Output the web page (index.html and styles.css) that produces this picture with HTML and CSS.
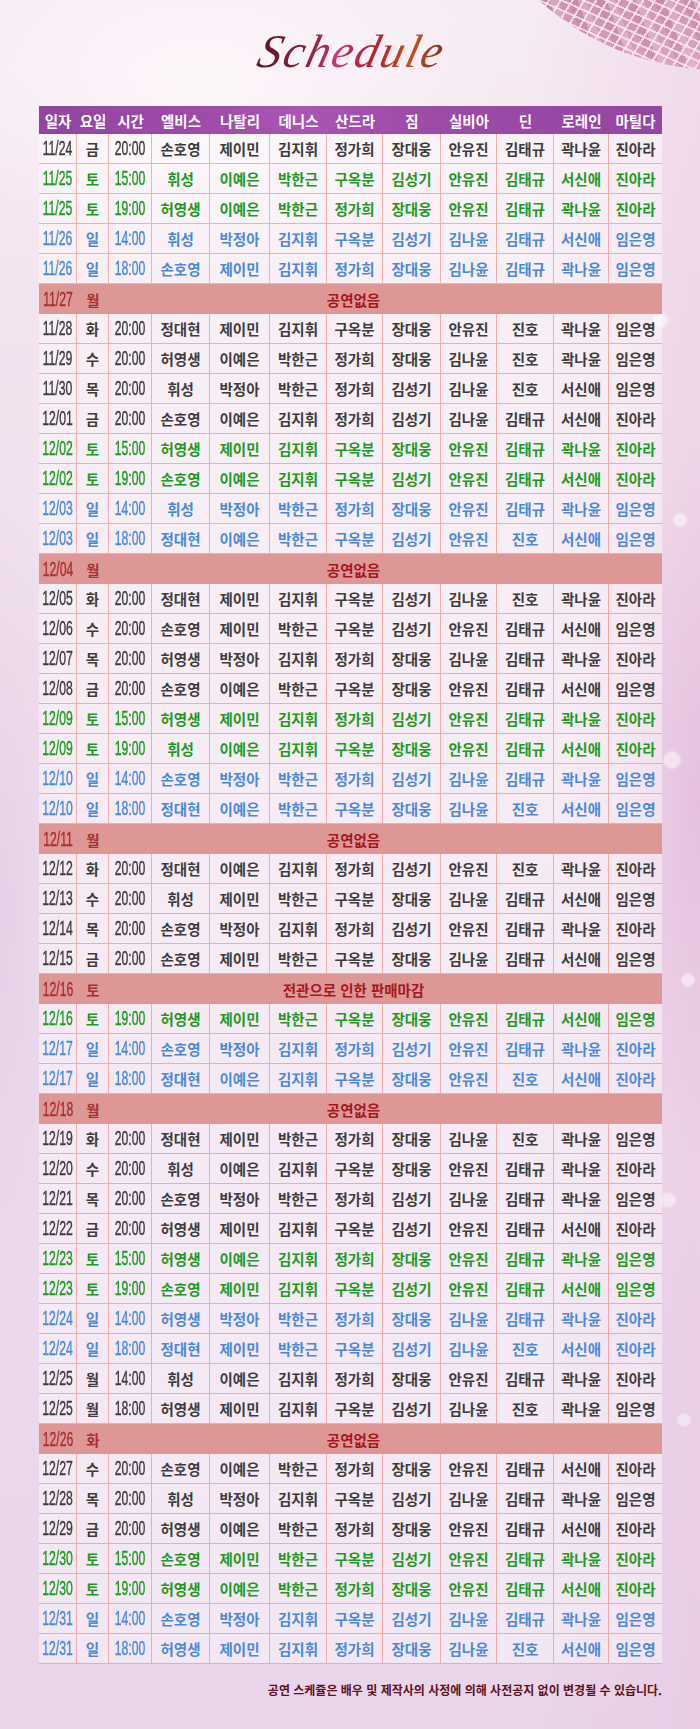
FILE: index.html
```html
<!DOCTYPE html>
<html lang="ko">
<head>
<meta charset="utf-8">
<title>Schedule</title>
<link rel="stylesheet" href="styles.css">
</head>
<body>
<div class="page">
  <div class="ball"></div>
  <h1 class="title">Schedule</h1>
  <table class="schedule">
    <colgroup>
      <col class="c-date"><col class="c-day"><col class="c-time">
      <col class="c-a"><col class="c-b"><col class="c-c"><col class="c-d"><col class="c-e">
      <col class="c-f"><col class="c-g"><col class="c-h"><col class="c-i">
    </colgroup>
    <thead>
      <tr class="head">
        <th>일자</th><th>요일</th><th>시간</th><th>엘비스</th><th>나탈리</th><th>데니스</th><th>산드라</th><th>짐</th><th>실비아</th><th>딘</th><th>로레인</th><th>마틸다</th>
      </tr>
    </thead>
    <tbody>
      <tr><td class="n"><span>11/24</span></td><td>금</td><td class="n"><span>20:00</span></td><td>손호영</td><td>제이민</td><td>김지휘</td><td>정가희</td><td>장대웅</td><td>안유진</td><td>김태규</td><td>곽나윤</td><td>진아라</td></tr>
      <tr class="sat"><td class="n"><span>11/25</span></td><td>토</td><td class="n"><span>15:00</span></td><td>휘성</td><td>이예은</td><td>박한근</td><td>구옥분</td><td>김성기</td><td>안유진</td><td>김태규</td><td>서신애</td><td>진아라</td></tr>
      <tr class="sat"><td class="n"><span>11/25</span></td><td>토</td><td class="n"><span>19:00</span></td><td>허영생</td><td>이예은</td><td>박한근</td><td>정가희</td><td>장대웅</td><td>안유진</td><td>김태규</td><td>곽나윤</td><td>진아라</td></tr>
      <tr class="sun"><td class="n"><span>11/26</span></td><td>일</td><td class="n"><span>14:00</span></td><td>휘성</td><td>박정아</td><td>김지휘</td><td>구옥분</td><td>김성기</td><td>김나윤</td><td>김태규</td><td>서신애</td><td>임은영</td></tr>
      <tr class="sun"><td class="n"><span>11/26</span></td><td>일</td><td class="n"><span>18:00</span></td><td>손호영</td><td>제이민</td><td>김지휘</td><td>정가희</td><td>장대웅</td><td>김나윤</td><td>김태규</td><td>곽나윤</td><td>임은영</td></tr>
      <tr class="off"><td class="n"><span>11/27</span></td><td>월</td><td class="msg" colspan="10">공연없음</td></tr>
      <tr><td class="n"><span>11/28</span></td><td>화</td><td class="n"><span>20:00</span></td><td>정대현</td><td>제이민</td><td>김지휘</td><td>구옥분</td><td>장대웅</td><td>안유진</td><td>진호</td><td>곽나윤</td><td>임은영</td></tr>
      <tr><td class="n"><span>11/29</span></td><td>수</td><td class="n"><span>20:00</span></td><td>허영생</td><td>이예은</td><td>박한근</td><td>정가희</td><td>장대웅</td><td>김나윤</td><td>진호</td><td>곽나윤</td><td>임은영</td></tr>
      <tr><td class="n"><span>11/30</span></td><td>목</td><td class="n"><span>20:00</span></td><td>휘성</td><td>박정아</td><td>박한근</td><td>정가희</td><td>김성기</td><td>김나윤</td><td>진호</td><td>서신애</td><td>임은영</td></tr>
      <tr><td class="n"><span>12/01</span></td><td>금</td><td class="n"><span>20:00</span></td><td>손호영</td><td>이예은</td><td>김지휘</td><td>정가희</td><td>김성기</td><td>김나윤</td><td>김태규</td><td>서신애</td><td>진아라</td></tr>
      <tr class="sat"><td class="n"><span>12/02</span></td><td>토</td><td class="n"><span>15:00</span></td><td>허영생</td><td>제이민</td><td>김지휘</td><td>구옥분</td><td>장대웅</td><td>안유진</td><td>김태규</td><td>곽나윤</td><td>진아라</td></tr>
      <tr class="sat"><td class="n"><span>12/02</span></td><td>토</td><td class="n"><span>19:00</span></td><td>손호영</td><td>이예은</td><td>김지휘</td><td>구옥분</td><td>김성기</td><td>안유진</td><td>김태규</td><td>서신애</td><td>진아라</td></tr>
      <tr class="sun"><td class="n"><span>12/03</span></td><td>일</td><td class="n"><span>14:00</span></td><td>휘성</td><td>박정아</td><td>박한근</td><td>정가희</td><td>장대웅</td><td>안유진</td><td>김태규</td><td>곽나윤</td><td>임은영</td></tr>
      <tr class="sun"><td class="n"><span>12/03</span></td><td>일</td><td class="n"><span>18:00</span></td><td>정대현</td><td>이예은</td><td>박한근</td><td>구옥분</td><td>김성기</td><td>안유진</td><td>진호</td><td>서신애</td><td>임은영</td></tr>
      <tr class="off"><td class="n"><span>12/04</span></td><td>월</td><td class="msg" colspan="10">공연없음</td></tr>
      <tr><td class="n"><span>12/05</span></td><td>화</td><td class="n"><span>20:00</span></td><td>정대현</td><td>제이민</td><td>김지휘</td><td>구옥분</td><td>김성기</td><td>김나윤</td><td>진호</td><td>곽나윤</td><td>진아라</td></tr>
      <tr><td class="n"><span>12/06</span></td><td>수</td><td class="n"><span>20:00</span></td><td>손호영</td><td>제이민</td><td>박한근</td><td>구옥분</td><td>김성기</td><td>안유진</td><td>김태규</td><td>서신애</td><td>임은영</td></tr>
      <tr><td class="n"><span>12/07</span></td><td>목</td><td class="n"><span>20:00</span></td><td>허영생</td><td>박정아</td><td>김지휘</td><td>정가희</td><td>장대웅</td><td>김나윤</td><td>김태규</td><td>곽나윤</td><td>진아라</td></tr>
      <tr><td class="n"><span>12/08</span></td><td>금</td><td class="n"><span>20:00</span></td><td>손호영</td><td>이예은</td><td>박한근</td><td>구옥분</td><td>장대웅</td><td>안유진</td><td>김태규</td><td>서신애</td><td>임은영</td></tr>
      <tr class="sat"><td class="n"><span>12/09</span></td><td>토</td><td class="n"><span>15:00</span></td><td>허영생</td><td>제이민</td><td>김지휘</td><td>정가희</td><td>김성기</td><td>안유진</td><td>김태규</td><td>곽나윤</td><td>진아라</td></tr>
      <tr class="sat"><td class="n"><span>12/09</span></td><td>토</td><td class="n"><span>19:00</span></td><td>휘성</td><td>이예은</td><td>김지휘</td><td>구옥분</td><td>장대웅</td><td>안유진</td><td>김태규</td><td>서신애</td><td>진아라</td></tr>
      <tr class="sun"><td class="n"><span>12/10</span></td><td>일</td><td class="n"><span>14:00</span></td><td>손호영</td><td>박정아</td><td>박한근</td><td>정가희</td><td>김성기</td><td>김나윤</td><td>김태규</td><td>곽나윤</td><td>임은영</td></tr>
      <tr class="sun"><td class="n"><span>12/10</span></td><td>일</td><td class="n"><span>18:00</span></td><td>정대현</td><td>이예은</td><td>박한근</td><td>구옥분</td><td>장대웅</td><td>김나윤</td><td>진호</td><td>서신애</td><td>임은영</td></tr>
      <tr class="off"><td class="n"><span>12/11</span></td><td>월</td><td class="msg" colspan="10">공연없음</td></tr>
      <tr><td class="n"><span>12/12</span></td><td>화</td><td class="n"><span>20:00</span></td><td>정대현</td><td>이예은</td><td>김지휘</td><td>정가희</td><td>김성기</td><td>안유진</td><td>진호</td><td>곽나윤</td><td>진아라</td></tr>
      <tr><td class="n"><span>12/13</span></td><td>수</td><td class="n"><span>20:00</span></td><td>휘성</td><td>제이민</td><td>박한근</td><td>구옥분</td><td>장대웅</td><td>김나윤</td><td>김태규</td><td>서신애</td><td>임은영</td></tr>
      <tr><td class="n"><span>12/14</span></td><td>목</td><td class="n"><span>20:00</span></td><td>손호영</td><td>박정아</td><td>김지휘</td><td>정가희</td><td>김성기</td><td>안유진</td><td>김태규</td><td>곽나윤</td><td>진아라</td></tr>
      <tr><td class="n"><span>12/15</span></td><td>금</td><td class="n"><span>20:00</span></td><td>손호영</td><td>제이민</td><td>박한근</td><td>구옥분</td><td>장대웅</td><td>김나윤</td><td>김태규</td><td>서신애</td><td>임은영</td></tr>
      <tr class="off"><td class="n"><span>12/16</span></td><td>토</td><td class="msg" colspan="10">전관으로 인한 판매마감</td></tr>
      <tr class="sat"><td class="n"><span>12/16</span></td><td>토</td><td class="n"><span>19:00</span></td><td>허영생</td><td>제이민</td><td>박한근</td><td>구옥분</td><td>장대웅</td><td>안유진</td><td>김태규</td><td>서신애</td><td>임은영</td></tr>
      <tr class="sun"><td class="n"><span>12/17</span></td><td>일</td><td class="n"><span>14:00</span></td><td>손호영</td><td>박정아</td><td>김지휘</td><td>정가희</td><td>김성기</td><td>안유진</td><td>김태규</td><td>곽나윤</td><td>진아라</td></tr>
      <tr class="sun"><td class="n"><span>12/17</span></td><td>일</td><td class="n"><span>18:00</span></td><td>정대현</td><td>이예은</td><td>김지휘</td><td>구옥분</td><td>장대웅</td><td>안유진</td><td>진호</td><td>서신애</td><td>진아라</td></tr>
      <tr class="off"><td class="n"><span>12/18</span></td><td>월</td><td class="msg" colspan="10">공연없음</td></tr>
      <tr><td class="n"><span>12/19</span></td><td>화</td><td class="n"><span>20:00</span></td><td>정대현</td><td>제이민</td><td>박한근</td><td>정가희</td><td>장대웅</td><td>김나윤</td><td>진호</td><td>곽나윤</td><td>임은영</td></tr>
      <tr><td class="n"><span>12/20</span></td><td>수</td><td class="n"><span>20:00</span></td><td>휘성</td><td>이예은</td><td>김지휘</td><td>구옥분</td><td>장대웅</td><td>안유진</td><td>김태규</td><td>곽나윤</td><td>진아라</td></tr>
      <tr><td class="n"><span>12/21</span></td><td>목</td><td class="n"><span>20:00</span></td><td>손호영</td><td>박정아</td><td>박한근</td><td>정가희</td><td>김성기</td><td>김나윤</td><td>김태규</td><td>곽나윤</td><td>임은영</td></tr>
      <tr><td class="n"><span>12/22</span></td><td>금</td><td class="n"><span>20:00</span></td><td>허영생</td><td>제이민</td><td>김지휘</td><td>구옥분</td><td>김성기</td><td>안유진</td><td>김태규</td><td>서신애</td><td>진아라</td></tr>
      <tr class="sat"><td class="n"><span>12/23</span></td><td>토</td><td class="n"><span>15:00</span></td><td>허영생</td><td>이예은</td><td>김지휘</td><td>정가희</td><td>장대웅</td><td>안유진</td><td>김태규</td><td>곽나윤</td><td>임은영</td></tr>
      <tr class="sat"><td class="n"><span>12/23</span></td><td>토</td><td class="n"><span>19:00</span></td><td>손호영</td><td>제이민</td><td>김지휘</td><td>구옥분</td><td>김성기</td><td>안유진</td><td>김태규</td><td>서신애</td><td>임은영</td></tr>
      <tr class="sun"><td class="n"><span>12/24</span></td><td>일</td><td class="n"><span>14:00</span></td><td>허영생</td><td>박정아</td><td>박한근</td><td>정가희</td><td>장대웅</td><td>김나윤</td><td>김태규</td><td>곽나윤</td><td>진아라</td></tr>
      <tr class="sun"><td class="n"><span>12/24</span></td><td>일</td><td class="n"><span>18:00</span></td><td>정대현</td><td>제이민</td><td>박한근</td><td>구옥분</td><td>김성기</td><td>김나윤</td><td>진호</td><td>서신애</td><td>진아라</td></tr>
      <tr><td class="n"><span>12/25</span></td><td>월</td><td class="n"><span>14:00</span></td><td>휘성</td><td>이예은</td><td>김지휘</td><td>정가희</td><td>장대웅</td><td>안유진</td><td>김태규</td><td>곽나윤</td><td>진아라</td></tr>
      <tr><td class="n"><span>12/25</span></td><td>월</td><td class="n"><span>18:00</span></td><td>허영생</td><td>제이민</td><td>김지휘</td><td>구옥분</td><td>김성기</td><td>김나윤</td><td>진호</td><td>곽나윤</td><td>임은영</td></tr>
      <tr class="off"><td class="n"><span>12/26</span></td><td>화</td><td class="msg" colspan="10">공연없음</td></tr>
      <tr><td class="n"><span>12/27</span></td><td>수</td><td class="n"><span>20:00</span></td><td>손호영</td><td>이예은</td><td>박한근</td><td>정가희</td><td>장대웅</td><td>안유진</td><td>김태규</td><td>서신애</td><td>진아라</td></tr>
      <tr><td class="n"><span>12/28</span></td><td>목</td><td class="n"><span>20:00</span></td><td>휘성</td><td>박정아</td><td>김지휘</td><td>구옥분</td><td>김성기</td><td>김나윤</td><td>김태규</td><td>곽나윤</td><td>임은영</td></tr>
      <tr><td class="n"><span>12/29</span></td><td>금</td><td class="n"><span>20:00</span></td><td>허영생</td><td>이예은</td><td>박한근</td><td>정가희</td><td>장대웅</td><td>안유진</td><td>김태규</td><td>서신애</td><td>진아라</td></tr>
      <tr class="sat"><td class="n"><span>12/30</span></td><td>토</td><td class="n"><span>15:00</span></td><td>손호영</td><td>제이민</td><td>박한근</td><td>구옥분</td><td>김성기</td><td>안유진</td><td>김태규</td><td>곽나윤</td><td>진아라</td></tr>
      <tr class="sat"><td class="n"><span>12/30</span></td><td>토</td><td class="n"><span>19:00</span></td><td>허영생</td><td>이예은</td><td>박한근</td><td>정가희</td><td>장대웅</td><td>안유진</td><td>김태규</td><td>서신애</td><td>진아라</td></tr>
      <tr class="sun"><td class="n"><span>12/31</span></td><td>일</td><td class="n"><span>14:00</span></td><td>손호영</td><td>박정아</td><td>김지휘</td><td>구옥분</td><td>김성기</td><td>김나윤</td><td>김태규</td><td>곽나윤</td><td>임은영</td></tr>
      <tr class="sun"><td class="n"><span>12/31</span></td><td>일</td><td class="n"><span>18:00</span></td><td>허영생</td><td>제이민</td><td>김지휘</td><td>정가희</td><td>장대웅</td><td>김나윤</td><td>진호</td><td>서신애</td><td>임은영</td></tr>
    </tbody>
  </table>
  <p class="note">공연 스케쥴은 배우 및 제작사의 사정에 의해 사전공지 없이 변경될 수 있습니다.</p>
</div>
</body>
</html>
```

FILE: styles.css
```css
html, body {
  margin: 0;
  padding: 0;
}

body {
  width: 700px;
  height: 1729px;
  overflow: hidden;
  font-family: "Noto Sans CJK KR", "Noto Sans", sans-serif;
}

.page {
  position: relative;
  width: 700px;
  height: 1729px;
  box-sizing: border-box;
  padding-top: 28px;
  overflow: hidden;
  background:
    radial-gradient(circle at 660px 320px, rgba(255,255,255,0.55) 0 6px, transparent 9px),
    radial-gradient(circle at 680px 520px, rgba(255,255,255,0.5) 0 5px, transparent 8px),
    radial-gradient(circle at 672px 760px, rgba(255,255,255,0.5) 0 7px, transparent 10px),
    radial-gradient(circle at 688px 980px, rgba(255,255,255,0.5) 0 5px, transparent 8px),
    radial-gradient(circle at 668px 1200px, rgba(255,255,255,0.45) 0 6px, transparent 9px),
    radial-gradient(circle at 684px 1420px, rgba(255,255,255,0.45) 0 5px, transparent 8px),
    radial-gradient(ellipse 120px 520px at 700px 800px, rgba(220,170,212,0.45), transparent 70%),
    radial-gradient(ellipse 110px 600px at 0px 900px, rgba(215,195,225,0.45), transparent 70%),
    radial-gradient(ellipse 420px 220px at 200px 80px, rgba(255,250,253,0.8), transparent 75%),
    linear-gradient(90deg, rgba(255,255,255,0) 75%, rgba(232,190,220,0.35) 100%),
    linear-gradient(180deg, #f7ecf4 0%, #f3e3ef 20%, #f0ddec 50%, #ebd8ec 80%, #e9d5ea 100%);
}

/* decorative disco ball in the top-right corner */
.ball {
  position: absolute;
  left: 450px;
  top: -470px;
  width: 540px;
  height: 540px;
  border-radius: 50%;
  background:
    radial-gradient(circle at 50% 50%, rgba(255,255,255,0) 82%, rgba(255,230,244,0.7) 100%),
    repeating-linear-gradient(24deg, rgba(255,240,248,0.75) 0 2px, rgba(255,255,255,0) 2px 9px),
    repeating-linear-gradient(-58deg, rgba(255,240,248,0.75) 0 2px, rgba(255,255,255,0) 2px 10px),
    repeating-linear-gradient(70deg, rgba(150,60,100,0.18) 0 9px, rgba(255,255,255,0.2) 9px 17px, rgba(255,255,255,0) 17px 27px),
    linear-gradient(165deg, #d996ba 0%, #c97ea3 45%, #b86e90 62%, #e3a8c8 100%);
  opacity: 0.8;
}

.title {
  position: relative;
  margin: 0 auto 32px;
  width: 200px;
  text-align: center;
  font-family: "Liberation Serif", "DejaVu Serif", serif;
  font-style: italic;
  font-weight: normal;
  font-size: 47px;
  line-height: 46px;
  letter-spacing: 2px;
  padding-left: 4px;
  transform: skewX(-14deg);
  color: #8a2040;
  background: linear-gradient(90deg, #521424 0%, #6e1a30 14%, #8c2040 30%, #c13a7c 44%, #b0223a 58%, #b8331c 70%, #c2521c 80%, #7a2a24 100%);
  -webkit-background-clip: text;
  background-clip: text;
  -webkit-text-fill-color: transparent;
}

.schedule {
  position: relative;
  margin-left: 39px;
  width: 623px;
  table-layout: fixed;
  border-collapse: separate;
  border-spacing: 0;
}

.c-date { width: 38px; }
.c-day { width: 32px; }
.c-time { width: 43px; }
.c-a { width: 58px; }
.c-b { width: 60px; }
.c-c { width: 57px; }
.c-d { width: 56px; }
.c-e { width: 58px; }
.c-f { width: 56px; }
.c-g { width: 57px; }
.c-h { width: 55px; }
.c-i { width: 53px; }

.head {
  height: 28px;
  background: linear-gradient(90deg, #9245a0 0%, #9d4aa9 25%, #a855b3 42%, #9f4ca9 60%, #9848a5 80%, #9447a1 100%);
}

.head th {
  padding: 0;
  color: #ffffff;
  font-size: 14.5px;
  font-weight: 700;
  text-align: center;
  white-space: nowrap;
}

tbody tr {
  height: 30px;
}

tbody td {
  padding: 0;
  text-align: center;
  vertical-align: middle;
  white-space: nowrap;
  font-size: 14.5px;
  font-weight: 700;
  color: #3c3c3c;
  background: rgba(255,255,255,0.42);
  border-bottom: 1px solid rgba(236,112,92,0.5);
  border-right: 1px solid rgba(236,112,92,0.5);
}

tbody td:last-child {
  border-right: 0;
}

td.n span {
  display: flex;
  justify-content: center;
  width: 100%;
  font-family: "Liberation Sans", "DejaVu Sans", sans-serif;
  font-size: 20px;
  font-weight: normal;
  -webkit-text-stroke: 0.4px currentColor;
  transform: scaleX(0.61);
}

tr.sat td { color: #1d9a22; }
tr.sun td { color: #4a89da; }

tr.off {
  background: #de9797;
}

tr.off td {
  background: transparent;
  border-right: 0;
  border-bottom: 0;
  color: #a8302f;
}

tr.off td.msg {
  color: #a3181e;
  font-weight: 700;
  padding-right: 64px;
}

.note {
  position: relative;
  margin: 18px 0 0;
  width: 662px;
  text-align: right;
  font-size: 12px;
  line-height: 16px;
  font-weight: 700;
  color: #5e1020;
}
```
